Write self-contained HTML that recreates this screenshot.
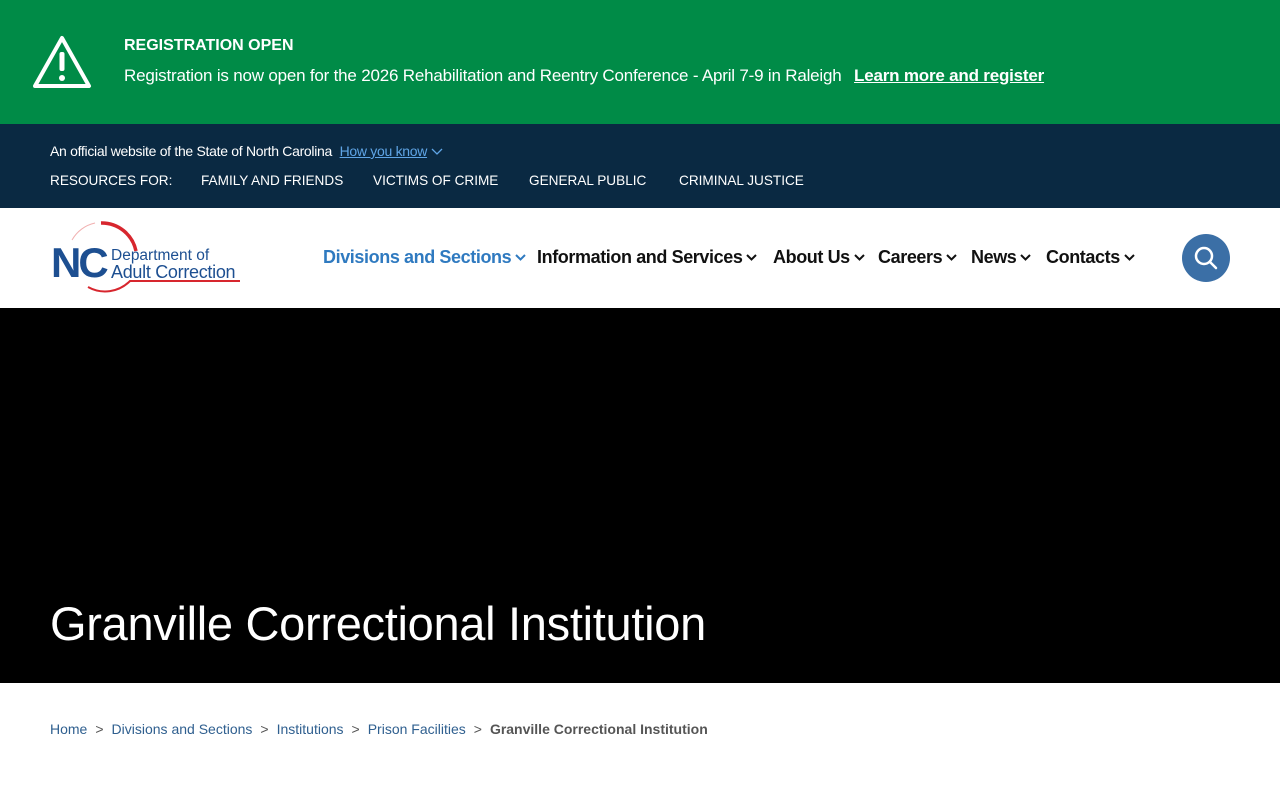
<!DOCTYPE html>
<html><head><meta charset="utf-8"><style>
*{margin:0;padding:0;box-sizing:border-box}
body{width:1280px;height:800px;overflow:hidden;font-family:"Liberation Sans",sans-serif;background:#fff}
.alert{position:absolute;top:0;left:0;width:1280px;height:124px;background:#008b47;color:#fff}
.alert h4{position:absolute;left:124px;top:37px;font-size:16px;font-weight:bold}
.alert p{position:absolute;left:124px;top:66px;font-size:17px;white-space:nowrap;letter-spacing:-0.2px}
.alert p a{color:#fff;font-weight:bold;text-decoration:underline;margin-left:8px}
.gov{position:absolute;top:124px;left:0;width:1280px;height:84px;background:#0a2942;color:#fff;font-size:14px}
.gov .l1{position:absolute;left:50px;top:19px;letter-spacing:-0.3px}
.gov .l1 a{color:#5fa5e6;text-decoration:underline;margin-left:4px}
.gov .l2{position:absolute;top:49px;white-space:nowrap;font-size:13.6px}
.hdr{position:absolute;top:208px;left:0;width:1280px;height:100px;background:#fff}
.nav{position:absolute;top:39px;font-size:18px;font-weight:bold;color:#111;white-space:nowrap;letter-spacing:-0.4px}
.nav span{position:absolute;white-space:nowrap}
.nav svg{margin-left:4px;vertical-align:2px}
.search{position:absolute;left:1182px;top:26px;width:48px;height:48px;border-radius:50%;background:#3b6fa6}
.hero{position:absolute;top:308px;left:0;width:1280px;height:375px;background:#000}
.hero h1{position:absolute;left:50px;top:288px;color:#fff;font-size:47px;font-weight:normal;letter-spacing:-0.3px}
.bc{position:absolute;top:721px;left:50px;font-size:14px;color:#444;white-space:nowrap}
.bc a{color:#2f5f8f;text-decoration:none}
.bc i{font-style:normal;margin:0 8px;color:#555}
</style></head><body>
<div class="alert">
<svg style="position:absolute;left:32px;top:35px" width="60" height="54" viewBox="0 0 60 54"><path d="M30 3 L57 51 H3 Z" fill="none" stroke="#fff" stroke-width="4" stroke-linejoin="round"/><rect x="27.5" y="17" width="5" height="19" rx="2" fill="#fff"/><circle cx="30" cy="43" r="3" fill="#fff"/></svg>
<h4>REGISTRATION OPEN</h4>
<p>Registration is now open for the 2026 Rehabilitation and Reentry Conference - April 7-9 in Raleigh <a>Learn more and register</a></p>
</div>
<div class="gov">
<div class="l1">An official website of the State of North Carolina <a>How you know</a> <svg width="12" height="8" viewBox="0 0 12 8"><path d="M1 1 L6 6 L11 1" fill="none" stroke="#5fa5e6" stroke-width="1.3"/></svg></div>
<span class="l2" style="left:50px">RESOURCES FOR:</span>
<span class="l2" style="left:201px">FAMILY AND FRIENDS</span>
<span class="l2" style="left:373px">VICTIMS OF CRIME</span>
<span class="l2" style="left:529px">GENERAL PUBLIC</span>
<span class="l2" style="left:679px">CRIMINAL JUSTICE</span>
</div>
<div class="hdr">
<svg style="position:absolute;left:50px;top:10px" width="195" height="80" viewBox="0 0 195 80">
<path d="M51 5 A35 35 0 0 1 86 33" fill="none" stroke="#d7262e" stroke-width="3.5"/>
<path d="M38 69 A35 35 0 0 0 80 63 L190 63" fill="none" stroke="#d7262e" stroke-width="2"/>
<path d="M45 5 A35 35 0 0 0 22 22" fill="none" stroke="#f1b0b0" stroke-width="1"/>
<text x="1" y="59" font-family="Liberation Sans" font-weight="bold" font-size="42" fill="#1d4f91" letter-spacing="-3">NC</text>
<text x="61" y="42" font-family="Liberation Sans" font-size="15.5" fill="#1d4f91">Department of</text>
<text x="61" y="60" font-family="Liberation Sans" font-size="18" fill="#1d4f91" letter-spacing="-0.3">Adult Correction</text>
</svg>
<div class="nav">
<span style="left:323px;color:#2f7ac0">Divisions and Sections<svg width="11" height="7" viewBox="0 0 11 7"><path d="M1 1 L5.5 5.5 L10 1" fill="none" stroke="#2f7ac0" stroke-width="2"/></svg></span>
<span style="left:537px">Information and Services<svg width="11" height="7" viewBox="0 0 11 7"><path d="M1 1 L5.5 5.5 L10 1" fill="none" stroke="#111" stroke-width="2"/></svg></span>
<span style="left:773px">About Us<svg width="11" height="7" viewBox="0 0 11 7"><path d="M1 1 L5.5 5.5 L10 1" fill="none" stroke="#111" stroke-width="2"/></svg></span>
<span style="left:878px">Careers<svg width="11" height="7" viewBox="0 0 11 7"><path d="M1 1 L5.5 5.5 L10 1" fill="none" stroke="#111" stroke-width="2"/></svg></span>
<span style="left:971px">News<svg width="11" height="7" viewBox="0 0 11 7"><path d="M1 1 L5.5 5.5 L10 1" fill="none" stroke="#111" stroke-width="2"/></svg></span>
<span style="left:1046px">Contacts<svg width="11" height="7" viewBox="0 0 11 7"><path d="M1 1 L5.5 5.5 L10 1" fill="none" stroke="#111" stroke-width="2"/></svg></span>
</div>
<div class="search"><svg width="48" height="48" viewBox="0 0 48 48"><circle cx="22" cy="22" r="8" fill="none" stroke="#fff" stroke-width="2.5"/><path d="M28 28 L34 34" stroke="#fff" stroke-width="2.5" stroke-linecap="round"/></svg></div>
</div>
<div class="hero"><h1>Granville Correctional Institution</h1></div>
<div class="bc"><a>Home</a><i>&gt;</i><a>Divisions and Sections</a><i>&gt;</i><a>Institutions</a><i>&gt;</i><a>Prison Facilities</a><i>&gt;</i><b style="color:#555">Granville Correctional Institution</b></div>
</body></html>
